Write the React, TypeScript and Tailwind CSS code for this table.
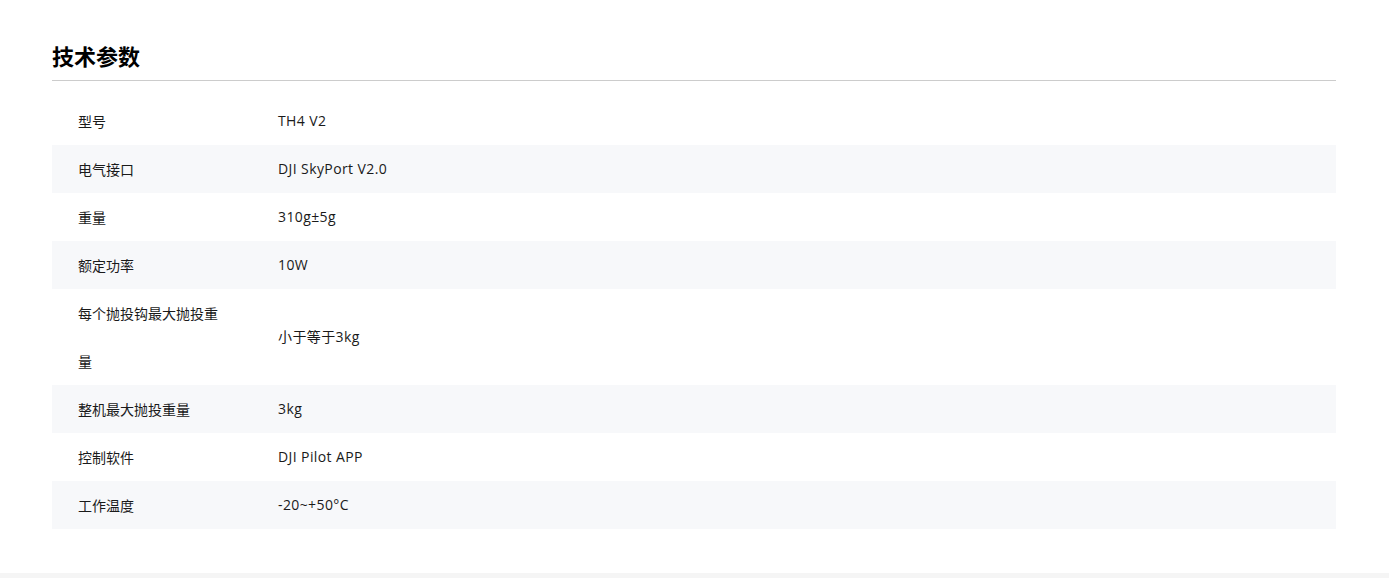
const specs: [string, string][] = [
  ["型号", "TH4 V2"],
  ["电气接口", "DJI SkyPort V2.0"],
  ["重量", "310g±5g"],
  ["额定功率", "10W"],
  ["每个抛投钩最大抛投重量", "小于等于3kg"],
  ["整机最大抛投重量", "3kg"],
  ["控制软件", "DJI Pilot APP"],
  ["工作温度", "-20~+50°C"],
];

export default function App() {
  return (
    <div className="w-[1389px] h-[578px] bg-white overflow-hidden flex flex-col font-['Open_Sans','Noto_Sans_CJK_SC',sans-serif]">
      <div className="px-[52px] pt-[40px] pb-[44px] w-[1388px]">
        <h2 className="text-[22px] leading-[30px] font-bold text-black font-['Noto_Sans_CJK_SC',sans-serif]">技术参数</h2>
        <div className="mt-[10px] h-px bg-[#cccccc]" />
        <table className="mt-[16px] w-full border-collapse text-[14px] text-[#1a1a1a]">
          <tbody>
            {specs.map(([k, v], i) => (
              <tr key={k} className={i % 2 === 1 ? "bg-[#f7f8fa]" : "bg-white"}>
                <td className="w-[200px] px-[26px] leading-[48px] align-middle font-['Noto_Sans_CJK_SC',sans-serif]">{k}</td>
                <td className="px-[26px] leading-[48px] align-middle tracking-[0.4px]">{v}</td>
              </tr>
            ))}
          </tbody>
        </table>
      </div>
      <div className="flex-1 bg-[#f5f5f5]" />
    </div>
  );
}
